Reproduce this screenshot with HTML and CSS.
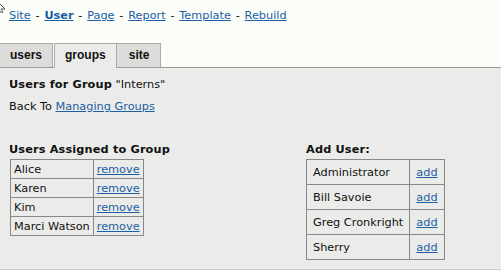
FILE: index.html
```html
<!DOCTYPE html>
<html lang="en">
<head>
  <meta charset="UTF-8" />
  <title>Group Users</title>
  <link rel="stylesheet" href="styles.css">
</head>
<body>

  <svg class="cursor" width="6" height="13" viewBox="0 0 6 13">
    <path d="M-4 0 L5 9 L1 9 L3 12 L1 12.5 L-1 9.5 L-4 12 Z" fill="#fff" stroke="#555" stroke-width="1"/>
  </svg>

  <div class="nav">
    <a href="#">Site</a> - <a href="#" class="current">User</a> - <a href="#">Page</a> - <a href="#">Report</a> - <a href="#">Template</a> - <a href="#">Rebuild</a>
  </div>

  <div class="tabs">
    <div class="tab">users</div>
    <div class="tab active">groups</div>
    <div class="tab last">site</div>
  </div>

  <div class="panel">
    <div class="title"><b>Users for Group</b> "Interns"</div>
    <div class="back">Back To <a href="#">Managing Groups</a></div>

    <div class="columns">
      <div class="col">
        <h3>Users Assigned to Group</h3>
        <table class="list small">
          <tr><td>Alice</td><td><a href="#">remove</a></td></tr>
          <tr><td>Karen</td><td><a href="#">remove</a></td></tr>
          <tr><td>Kim</td><td><a href="#">remove</a></td></tr>
          <tr><td>Marci Watson</td><td><a href="#">remove</a></td></tr>
        </table>
      </div>
      <div class="col">
        <h3>Add User:</h3>
        <table class="list big">
          <tr><td>Administrator</td><td><a href="#">add</a></td></tr>
          <tr><td>Bill Savoie</td><td><a href="#">add</a></td></tr>
          <tr><td>Greg Cronkright</td><td><a href="#">add</a></td></tr>
          <tr><td>Sherry</td><td><a href="#">add</a></td></tr>
        </table>
      </div>
    </div>
  </div>

</body>
</html>
```

FILE: styles.css
```css
body {
  margin: 0;
  background: #fbfdf9;
  font-family: "DejaVu Sans", Verdana, sans-serif;
  font-size: 11.3px;
  line-height: 13px;
  color: #111;
}

a {
  color: #1c5fa5;
}

b {
  letter-spacing: 0.15px;
}

.cursor {
  position: absolute;
  left: 0;
  top: 0;
}

.nav {
  padding: 9px 9px 0;
  height: 34px;
  word-spacing: 1.2px;
}

.nav .current {
  font-weight: bold;
}

.tabs {
  display: flex;
  height: 24px;
  border-bottom: 1px solid #999;
}

.tab {
  font-family: "Liberation Sans", Arial, sans-serif;
  font-weight: bold;
  font-size: 12px;
  line-height: 22px;
  padding: 0 10px;
  background: #dcdcda;
  border: 1px solid #aaa;
  border-bottom: none;
}

.tab:first-child {
  border-left: none;
  margin-right: 1px;
}

.tab.active {
  background: #ebecea;
  height: 24px;
  margin-bottom: -1px;
  border-right: none;
}

.tab.last {
  padding: 0 11px 0 12px;
}

.panel {
  background: #ebecea;
  height: 191px;
  padding: 10px 0 0 9px;
  border-bottom: 1px solid #ccc;
}

.back {
  margin-top: 9px;
}

.columns {
  display: grid;
  grid-template-columns: 297px auto;
  margin-top: 30px;
}

h3 {
  font-size: 11.3px;
  letter-spacing: 0.15px;
  margin: 0 0 3px;
}

.list {
  border-collapse: collapse;
  border: 1px solid #888;
}

.list td {
  border: 1px solid #888;
}

.small {
  margin-left: 1px;
}

.small td {
  padding: 3px 3px 2px;
}

.big td {
  padding: 6px 6px 5px;
}
```
